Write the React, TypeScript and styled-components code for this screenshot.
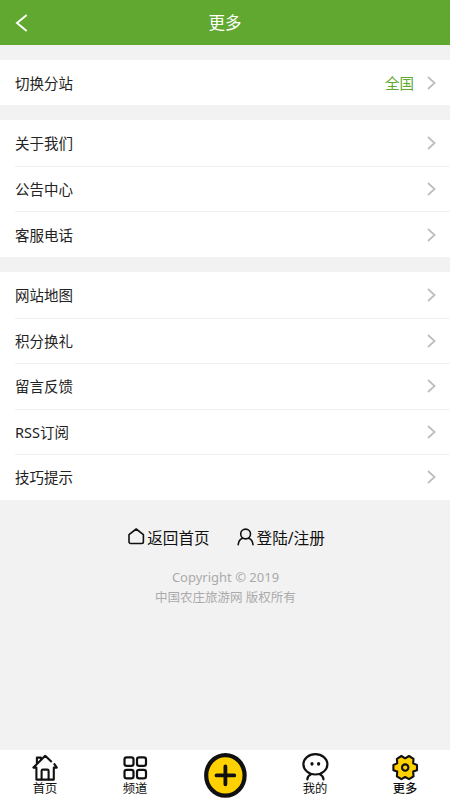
import React from "react";
import styled, { createGlobalStyle } from "styled-components";

const GlobalStyle = createGlobalStyle`
  * { box-sizing: border-box; }
  body {
    margin: 0;
    background: #f2f2f2;
    font-family: "Noto Sans", "Noto Sans CJK SC", sans-serif;
    color: #222;
  }
`;

const Screen = styled.div`
  display: flex;
  flex-direction: column;
  width: 450px;
  height: 800px;
  overflow: hidden;
  background: #f2f2f2;
`;

const Header = styled.header`
  display: grid;
  grid-template-columns: 45px 1fr 45px;
  align-items: center;
  flex: none;
  height: 45px;
  background: #61a831;
  color: #fff;
`;

const BackButton = styled.a`
  display: flex;
  padding-left: 15px;
`;

const Title = styled.h1`
  margin: 0;
  font-size: 16.5px;
  line-height: 45px;
  font-weight: 400;
  text-align: center;
`;

const Groups = styled.main`
  display: flex;
  flex-direction: column;
  gap: 15.3px;
  padding-top: 15px;
`;

const Group = styled.section`
  background: #fff;

  &:first-child { height: 45px; }
`;

const Row = styled.a`
  display: flex;
  align-items: center;
  height: 45.5px;
  padding-right: 14px;
  margin-left: 15px;
  font-size: 14.5px;
  line-height: 22px;

  & + & {
    border-top: 1px solid #f0f0f0;
  }
`;

const RowLabel = styled.span`
  flex: 1;
`;

const RowValue = styled.span`
  margin-right: 13px;
  color: #61a831;
`;

const QuickLinks = styled.div`
  display: flex;
  justify-content: center;
  gap: 27px;
  margin-top: 26px;
  padding-left: 3px;
`;

const QuickLink = styled.a`
  display: flex;
  align-items: center;
  gap: 2px;
  font-size: 15.6px;
  line-height: 24px;
  color: #111;

  svg { position: relative; top: -1px; }
`;

const Copyright = styled.footer`
  flex: 1;
  margin-top: 17.5px;
  padding-left: 1px;
  font-size: 12.5px;
  line-height: 20px;
  text-align: center;
  color: #aaa;

  p { margin: 0; }
  p:first-child { font-size: 13px; line-height: 21px; }
`;

const TabBar = styled.nav`
  display: grid;
  grid-template-columns: repeat(5, 1fr);
  flex: none;
  height: 50px;
  background: #fff;
`;

const Tab = styled.a<{ $active?: boolean }>`
  display: flex;
  flex-direction: column;
  align-items: center;
  padding-top: 3px;
  color: #111;
  font-size: 12.3px;
  line-height: 14px;
  font-weight: ${(p) => (p.$active ? 500 : 400)};

  svg { flex: none; }
`;

const TabLabel = styled.span`
  margin-top: 1px;
`;

const Chevron = () => (
  <svg width="9" height="14" viewBox="0 0 9 14" fill="none" stroke="#bcbcc2" strokeWidth="1.7">
    <path d="M1 1l6.6 6L1 13" />
  </svg>
);

const BackIcon = () => (
  <svg width="13" height="18" viewBox="0 0 13 18" fill="none" stroke="#fff" strokeWidth="1.9">
    <path d="M11.7 1L2 9l9.7 8" />
  </svg>
);

const HouseOutline = () => (
  <svg width="17" height="17" viewBox="0 0 17 17" fill="none" stroke="#111" strokeWidth="1.6" strokeLinejoin="round">
    <path d="M1 6.6L8.2 1l7.2 5.6v7.2a1.7 1.7 0 0 1-1.7 1.7h-11A1.7 1.7 0 0 1 1 13.8z" />
  </svg>
);

const PersonOutline = () => (
  <svg width="18" height="18" viewBox="0 0 18 18" fill="none" stroke="#111" strokeWidth="1.6" strokeLinecap="round">
    <circle cx="8.6" cy="6" r="4.9" />
    <path d="M1.2 16.8c.3-3.4 2-5.6 4.4-6.5M16 16.8c-.3-3.4-2-5.6-4.4-6.5" />
  </svg>
);

const HomeIcon = () => (
  <svg width="28" height="28" viewBox="0 0 28 28" fill="none" stroke="#111" strokeWidth="2.1" strokeLinejoin="round" strokeLinecap="round">
    <path d="M20.2 8.4L14.2 2.8 2.4 14.6H5.4V26.6h17.4V14.6h3L23.4 11.2" />
    <path d="M5.9 10V4.6h4v1.6" />
    <path d="M10.6 26.4v-8.6q0-1.2 1.2-1.2h4.6q1.2 0 1.2 1.2v8.6" />
  </svg>
);

const GridIcon = () => (
  <svg width="28" height="28" viewBox="0 0 28 28" fill="none" stroke="#111" strokeWidth="2.2">
    <rect x="3.5" y="4.3" width="9" height="8.6" rx="2.2" />
    <rect x="16" y="4.3" width="9" height="8.6" rx="2.2" />
    <rect x="3.5" y="16.8" width="9" height="8.6" rx="2.2" />
    <rect x="16" y="16.8" width="9" height="8.6" rx="2.2" />
  </svg>
);

const AddIcon = () => (
  <svg width="44" height="46" viewBox="0 0 44 46" fill="none" stroke="#111" strokeLinecap="round">
    <ellipse cx="22.4" cy="22.4" rx="19.2" ry="20.3" fill="#ffd100" strokeWidth="4.2" />
    <path d="M13.5 22.4h17.8M22.4 13.5v17.8" strokeWidth="3.8" />
  </svg>
);

const FaceIcon = () => (
  <svg width="28" height="28" viewBox="0 0 28 28" fill="none" stroke="#111" strokeWidth="2.2" strokeLinecap="round">
    <ellipse cx="14.4" cy="11.3" rx="12" ry="10.2" />
    <path d="M10.2 21.3c-2.4.8-3.6 2.5-3.9 5M18.6 21.3c2.4.8 3.6 2.5 3.9 5" />
    <g fill="#111" stroke="none">
      <ellipse cx="11" cy="10.8" rx="1.6" ry="1.9" />
      <ellipse cx="17.6" cy="10.8" rx="1.6" ry="1.9" />
    </g>
  </svg>
);

const GearIcon = () => (
  <svg width="28" height="28" viewBox="0 0 28 28" fill="#ffd100" stroke="#111" strokeWidth="2.1" strokeLinejoin="round">
    <path d="M26 12V17.2L22.2 18.6 22.5 23.4 18 26.2 14.2 24 10.4 26.2 5.9 23.4 6.2 18.6 2.4 17.2V12L6.2 10.4 5.9 5.8 10.4 3 14.2 5.3 18 3 22.5 5.8 22.2 10.4Z" />
    <circle cx="14.2" cy="14.6" r="3.2" />
  </svg>
);

const groups: { label: string; value?: string }[][] = [
  [{ label: "切换分站", value: "全国" }],
  [{ label: "关于我们" }, { label: "公告中心" }, { label: "客服电话" }],
  [
    { label: "网站地图" },
    { label: "积分换礼" },
    { label: "留言反馈" },
    { label: "RSS订阅" },
    { label: "技巧提示" },
  ],
];

const tabs = [
  { label: "首页", Icon: HomeIcon },
  { label: "频道", Icon: GridIcon },
  { label: "", Icon: AddIcon },
  { label: "我的", Icon: FaceIcon },
  { label: "更多", Icon: GearIcon, active: true },
];

export default function App() {
  return (
    <Screen>
      <GlobalStyle />
      <Header>
        <BackButton aria-label="返回"><BackIcon /></BackButton>
        <Title>更多</Title>
      </Header>
      <Groups>
        {groups.map((rows) => (
          <Group key={rows[0].label}>
            {rows.map((row) => (
              <Row key={row.label}>
                <RowLabel>{row.label}</RowLabel>
                {row.value && <RowValue>{row.value}</RowValue>}
                <Chevron />
              </Row>
            ))}
          </Group>
        ))}
      </Groups>
      <QuickLinks>
        <QuickLink><HouseOutline />返回首页</QuickLink>
        <QuickLink><PersonOutline />登陆/注册</QuickLink>
      </QuickLinks>
      <Copyright>
        <p>Copyright © 2019</p>
        <p>中国农庄旅游网 版权所有</p>
      </Copyright>
      <TabBar>
        {tabs.map(({ label, Icon, active }) => (
          <Tab key={label || "add"} $active={active}>
            <Icon />
            {label && <TabLabel>{label}</TabLabel>}
          </Tab>
        ))}
      </TabBar>
    </Screen>
  );
}
